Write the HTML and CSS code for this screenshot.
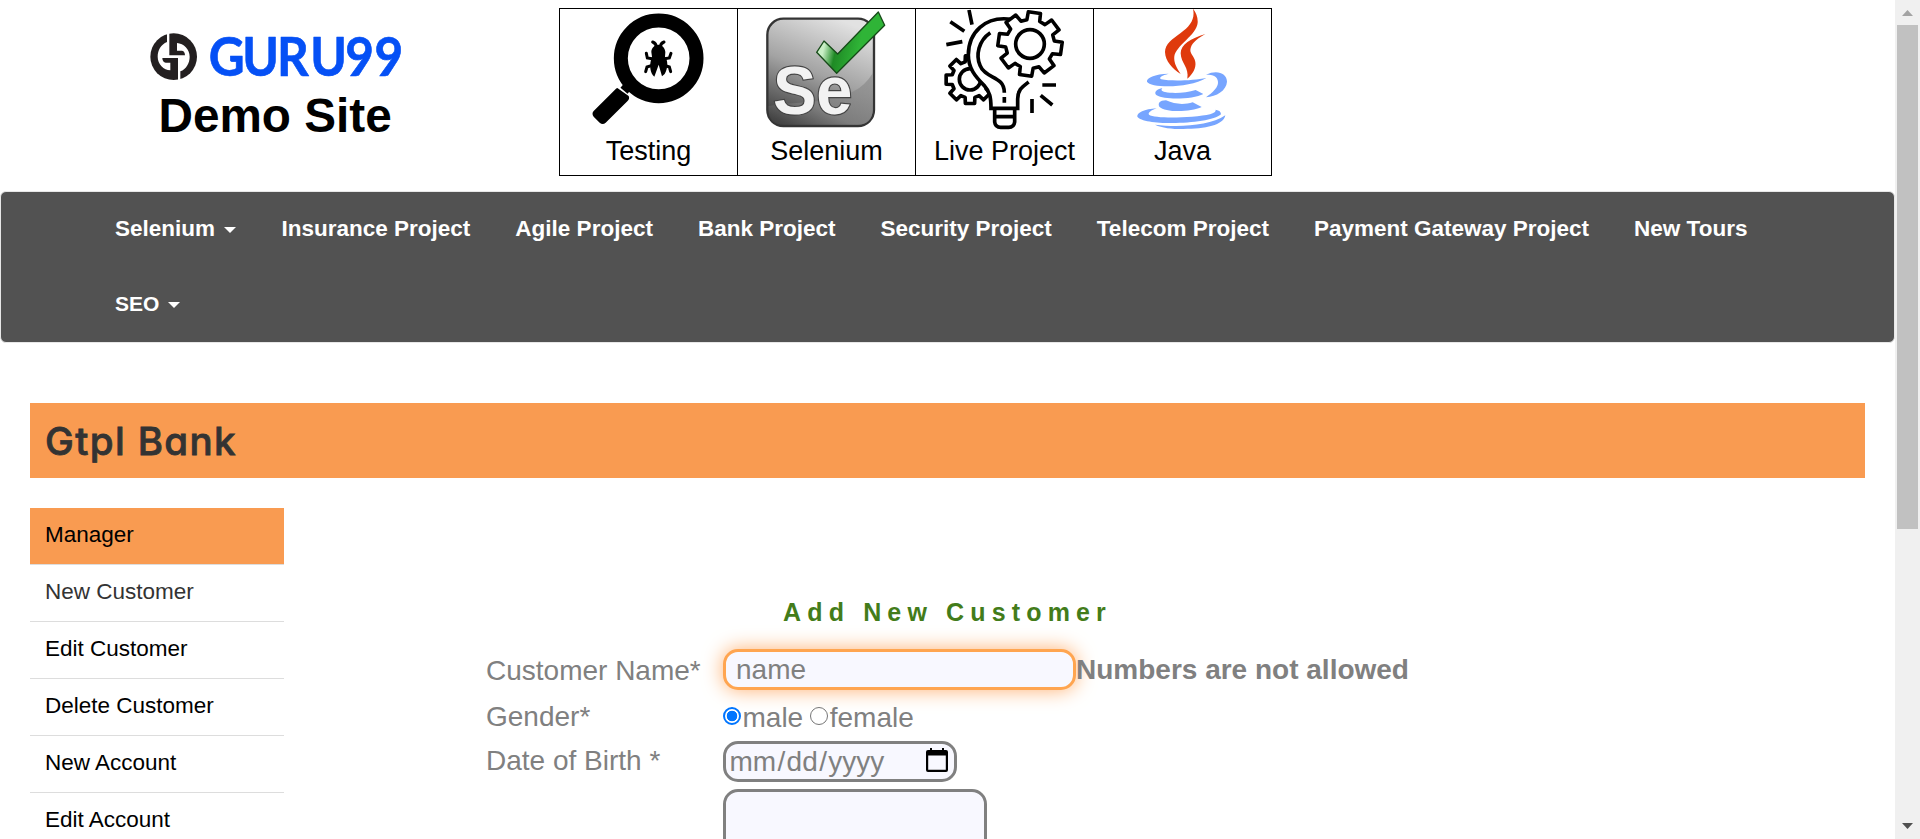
FILE: index.html
```html
<!DOCTYPE html>
<html lang="en">
<head>
<meta charset="utf-8">
<title>Gtpl Bank New Customer</title>
<link rel="stylesheet" href="styles.css">
</head>
<body>
<div class="page">
  <header class="header">
    <div class="brand">
      <svg class="logo" viewBox="60 99 780 144" width="260" height="48" role="img" aria-label="Guru99">
        <defs>
          <path id="half" d="M80 22V50C62 57 52 75 52 94C52 116 70 134 90 135V112H76C70 112 66 106 66 98H114V92H87V22Z"/>
        </defs>
        <g transform="translate(31 76)">
          <circle cx="100" cy="94" r="70" fill="#231f20"/>
          <use href="#half" fill="#fff"/>
          <use href="#half" fill="#fff" transform="rotate(180 100 94)"/>
        </g>
        <text transform="translate(236 227) scale(.91 1)" x="0 111 225 335 450 547" class="logo-text">GURU99</text>
      </svg>
      <div class="tagline">Demo Site</div>
    </div>
    <div class="courses">
      <a class="course">
        <svg viewBox="30 27 531 363" width="177" height="121">
          <circle cx="326" cy="175" r="113.500" fill="#fff" stroke="#000" stroke-width="42"/>
          <path d="M246 244L222 272" stroke="#000" stroke-width="28"/>
          <path d="M202 264L236 288Q240 296 232 304L167 368Q158 376 149 368L131 350Q124 341 131 333L195 269Q199 264 202 264Z"/>
          <path d="M325 134C338 134 346 146 346 157L345 170C354 180 355 203 344 222L336 229L326 194L313 230C301 220 296 195 306 170L304 156C304 146 312 134 325 134Z"/>
          <path d="M319 142Q319 130 308 126M331 142Q331 130 342 126M311 177L292 174L289 160M339 177L358 174L363 160M306 196L291 201L287 215M344 196L358 201L362 215" fill="none" stroke="#000" stroke-width="9" stroke-linecap="round"/>
        </svg>
        <span>Testing</span>
      </a>
      <a class="course">
        <svg viewBox="564 27 531 363" width="177" height="121">
          <defs>
            <linearGradient id="se-bg" x1=".65" y1="0" x2=".25" y2="1">
              <stop offset="0" stop-color="#e2e2e2"/><stop offset=".5" stop-color="#a3a3a3"/><stop offset="1" stop-color="#3c3c3c"/>
            </linearGradient>
            <linearGradient id="se-low" x1="1" y1="0" x2="0" y2="1">
              <stop offset="0" stop-color="#8c8c8c"/><stop offset=".6" stop-color="#868686"/><stop offset="1" stop-color="#3a3a3a"/>
            </linearGradient>
            <linearGradient id="tick" x1=".1" y1=".6" x2=".6" y2=".7">
              <stop offset="0" stop-color="#c9efc6"/><stop offset=".35" stop-color="#1f8a25"/><stop offset="1" stop-color="#2fb437"/>
            </linearGradient>
          </defs>
          <rect x="652" y="56" width="320" height="322" rx="48" fill="url(#se-bg)" stroke="#343434" stroke-width="7"/>
          <path d="M656 318C760 300 910 320 968 220V330Q966 374 924 374H700Q656 374 656 330Z" fill="url(#se-low)" opacity=".7"/>
          <text x="669" y="341" textLength="238" lengthAdjust="spacingAndGlyphs" class="se-text">Se</text>
          <path d="M800 157L822 123L863 162L985 36L1004 76L860 220Z" fill="url(#tick)" stroke="#174b19" stroke-width="4" stroke-linejoin="round"/>
        </svg>
        <span>Selenium</span>
      </a>
      <a class="course">
        <svg viewBox="18 27 531 363" width="177" height="121" fill="none" stroke="#000" stroke-width="11">
          <defs>
            <path id="gear" d="M-20-73L-19-98H19L20-73L37.500-65.800L55.900-82.700L82.700-55.900L65.800-37.500L73-20L98-19V19L73 20L65.800 37.500L82.700 55.900L55.900 82.700L37.500 65.800L20 73L19 98H-19L-20 73L-37.500 65.800L-55.900 82.700L-82.700 55.900L-65.800 37.500L-73 20L-98 19V-19L-73-20L-65.800-37.500L-82.700-55.900L-55.900-82.700L-37.500-65.800Z" stroke-linejoin="round"/>
          </defs>
          <use href="#gear" transform="translate(180 239) scale(.73)" stroke-width="15"/>
          <circle cx="180" cy="238" r="32"/>
          <path d="M305 58C225 46 175 98 175 165C175 205 196 230 222 256C240 276 243 292 243 325H323V297C323 270 335 262 356 246L400 130Z" fill="#fff" stroke="none"/>
          <path d="M305 58C225 46 175 98 175 165C175 205 196 230 222 256C240 276 243 292 243 325H323V297C323 270 335 262 356 246"/>
          <path d="M241 98C205 122 197 166 210 196C226 238 283 226 283 278M283 291V308"/>
          <use href="#gear" transform="translate(360 132) rotate(8) scale(.97)" fill="#fff"/>
          <circle cx="360" cy="132" r="43"/>
          <path d="M254 325V366Q256 382 272 382H296Q312 382 314 366V325M254 350H314"/>
          <path d="M177 30L186 74M121 65L163 94M109 134L157 125M397 255H438M392 286L427 315M366 297V339"/>
        </svg>
        <span>Live Project</span>
      </a>
      <a class="course">
        <svg viewBox="552 27 531 363" width="177" height="121">
          <path fill="#df3a0d" d="M849 26C856 58 840 78 812 99C787 117 765 132 765 156C766 185 788 206 812 222C799 201 791 187 793 169C797 137 860 105 863 68C864 51 858 38 849 26Z"/>
          <path fill="#df3a0d" d="M886 102C842 115 812 134 812 160C813 190 838 203 832 236C848 223 859 204 856 186C853 167 837 161 842 144C847 126 866 114 886 102Z"/>
          <g fill="#77a5ff">
            <path d="M776 221C735 221 708 235 711 245C722 264 835 266 889 234C850 242 782 244 754 238C744 232 757 226 776 221Z"/>
            <path d="M888 224C920 208 951 219 951 245C949 272 920 289 888 292C910 276 925 261 924 246C923 229 910 224 888 224Z"/>
            <path d="M757 264C735 269 732 280 740 286C765 301 850 298 880 282L857 270C828 279 790 281 765 276C755 274 752 270 757 264Z"/>
            <path d="M768 301C748 301 743 311 748 320C766 338 840 337 875 321L848 307C825 314 795 314 768 301Z"/>
            <path d="M740 325C703 327 680 339 682 350C702 379 900 374 933 343C933 335 928 331 917 329C920 340 893 346 846 350C790 354 730 353 717 344C713 338 724 331 740 325Z"/>
            <path d="M735 374C805 383 898 378 946 346C941 376 886 387 820 387C783 387 757 384 735 374Z"/>
          </g>
        </svg>
        <span>Java</span>
      </a>
    </div>
  </header>

  <nav class="navbar">
    <a class="nav-item">Selenium<i class="caret"></i></a>
    <a class="nav-item">Insurance Project</a>
    <a class="nav-item">Agile Project</a>
    <a class="nav-item">Bank Project</a>
    <a class="nav-item">Security Project</a>
    <a class="nav-item">Telecom Project</a>
    <a class="nav-item">Payment Gateway Project</a>
    <a class="nav-item">New Tours</a>
    <a class="nav-item nav-item-small">SEO<i class="caret"></i></a>
  </nav>

  <h2 class="bank-title">Gtpl Bank</h2>

  <main class="content">
    <ul class="side-menu">
      <li class="active">Manager</li>
      <li class="current">New Customer</li>
      <li>Edit Customer</li>
      <li>Delete Customer</li>
      <li>New Account</li>
      <li>Edit Account</li>
    </ul>
    <form class="customer-form">
      <p class="form-heading">Add New Customer</p>
      <div class="row">
        <label class="label label-name">Customer Name*</label>
        <input class="text-input" type="text" placeholder="name">
        <span class="message">Numbers are not allowed</span>
      </div>
      <div class="row row-gender">
        <span class="label label-gender">Gender*</span>
        <span class="option"><i class="radio checked"></i>male</span>
        <span class="option"><i class="radio"></i>female</span>
      </div>
      <div class="row">
        <label class="label label-birth">Date of Birth *</label>
        <div class="date-input">
          <span class="date-text"><span>mm</span>/<span>dd</span>/<span>yyyy</span></span>
          <svg class="calendar" viewBox="0 0 22 24" width="22" height="24">
            <path d="M2 2H4V0H6V2H16V0H18V2H20Q22 2 22 4V22Q22 24 20 24H2Q0 24 0 22V4Q0 2 2 2ZM2.200 7.500V21.800H19.800V7.500Z" fill-rule="evenodd"/>
          </svg>
        </div>
      </div>
      <div class="row row-address">
        <span class="label"></span>
        <textarea class="address"></textarea>
      </div>
    </form>
  </main>
</div>
<div class="scrollbar">
  <svg class="arrow" viewBox="0 0 11 6" width="11" height="6"><path d="M5.500 0L11 6H0Z" fill="#a3a3a3"/></svg>
  <div class="thumb"></div>
  <svg class="arrow arrow-down" viewBox="0 0 11 6" width="11" height="6"><path d="M0 0H11L5.500 6Z" fill="#505050"/></svg>
</div>
</body>
</html>
```
FILE: styles.css
```css
* { box-sizing: border-box; }

body {
  margin: 0;
  height: 839px;
  display: flex;
  overflow: hidden;
  background: #fff;
  color: #000;
  font-family: "Liberation Sans", Arial, sans-serif;
}

.page { width: 1895px; height: 839px; overflow: hidden; }

/* Header */
.header { display: flex; height: 191px; }
.brand { width: 260px; margin: 33px 149px 0 150px; }
.logo { display: block; overflow: visible; }
.logo-text {
  font: 700 163px Lato, sans-serif;
  fill: #0550f5;
  stroke: #0550f5;
  stroke-width: 2px;
  stroke-linejoin: round;
}
.tagline {
  padding-left: 8.5px;
  font-size: 47.7px;
  font-weight: 700;
  line-height: 69px;
  white-space: nowrap;
}
.courses {
  display: flex;
  height: 168px;
  margin-top: 8px;
  border: 1px solid #000;
}
.course {
  width: 178px;
  border-right: 1px solid #000;
  font-size: 27px;
  line-height: 42px;
  text-align: center;
}
.course:last-child { width: 177px; border-right: 0; }
.course svg { display: block; }
.se-text {
  font: 700 205px "Liberation Sans", Arial, sans-serif;
  fill: #f2f2f2;
  stroke: #444;
  stroke-width: 7px;
  paint-order: stroke;
}

/* Navigation */
.navbar {
  display: flex;
  flex-wrap: wrap;
  height: 152px;
  padding: 0 91.5px;
  border: 1px solid #e7e7e7;
  border-radius: 6px;
  background: #525252;
}
.nav-item {
  display: flex;
  height: 75px;
  padding: 0 22.5px;
  color: #fff;
  font-size: 22.5px;
  font-weight: 700;
  line-height: 73px;
  white-space: nowrap;
}
.nav-item-small { font-size: 21px; }
.caret {
  margin: 35px 0.5px 0 9px;
  width: 12px;
  height: 6px;
  border: 6px solid transparent;
  border-top-color: #fff;
  border-bottom: 0;
}

/* Banner */
.bank-title {
  height: 75px;
  margin: 60px 30px 30px;
  padding-left: 15px;
  background: #f99b51;
  color: #333;
  font-family: Inter, sans-serif;
  font-size: 38.5px;
  font-weight: 500;
  font-feature-settings: "cv11", "ss03";
  letter-spacing: 1.4px;
  line-height: 76px;
  -webkit-text-stroke: 0.8px #333;
}

/* Side menu */
.content { display: flex; padding-left: 30px; }
.side-menu {
  width: 254px;
  margin: 0;
  padding: 0;
  list-style: none;
  font-size: 22.5px;
}
.side-menu li {
  height: 57px;
  padding-left: 15px;
  border-bottom: 1px solid #ddd;
  line-height: 54px;
}
.side-menu .active { background: #f99b51; background-clip: padding-box; }
.side-menu .current { color: #333; }

/* Form */
.customer-form {
  margin-left: 202px;
  padding-top: 87px;
  color: #808080;
  font-size: 28px;
}
.form-heading {
  margin: 0 0 20px;
  padding-left: 297px;
  color: #437c1a;
  font-size: 25px;
  font-weight: 700;
  letter-spacing: 6.15px;
  line-height: 34px;
}
.row { display: flex; height: 41px; white-space: nowrap; }
.label { width: 237px; flex: none; }
.label-name { line-height: 43px; }
.label-gender { line-height: 53px; }
.label-birth { line-height: 39px; }
.text-input {
  width: 353px;
  height: 41px;
  padding: 0 10px;
  border: 3px solid #ffa550;
  border-radius: 15px;
  outline: 0;
  background: #f8f8ff;
  box-shadow: 0 0 20px #ffb070;
  font: 28px "Liberation Sans", Arial, sans-serif;
}
.text-input::placeholder { color: #808080; }
.message { z-index: 1; font-weight: 700; line-height: 41px; }
.row-gender { height: 51px; line-height: 55px; }
.option { display: flex; margin-right: 7px; }
.radio {
  width: 18px;
  height: 18px;
  margin: 17px 1.5px 0 0;
  border: 1.5px solid #767676;
  border-radius: 50%;
}
.radio.checked {
  border: 2px solid #0075ff;
  background: radial-gradient(circle, #0075ff 5px, #fff 5.6px);
}
.date-input {
  display: flex;
  width: 234px;
  height: 41px;
  justify-content: space-between;
  padding: 0 6px 0 2px;
  border: 3px solid #808080;
  border-radius: 15px;
  background: #f8f8ff;
}
.date-text { line-height: 35px; }
.date-text span { padding: 0 1.4px; }
.calendar { margin-top: 4px; }
.row-address { margin-top: 7px; height: 100px; }
.address {
  width: 264px;
  height: 100px;
  border: 3px solid #808080;
  border-radius: 15px;
  background: #f8f8ff;
  resize: none;
}

/* Scrollbar */
.scrollbar {
  display: flex;
  flex-direction: column;
  width: 25px;
  height: 839px;
  padding: 10px 2px;
  background: #f0f0f0;
}
.arrow { margin-left: 5px; flex: none; }
.thumb { height: 504px; margin-top: 9px; background: #c1c1c1; }
.arrow-down { margin-top: auto; }
```
